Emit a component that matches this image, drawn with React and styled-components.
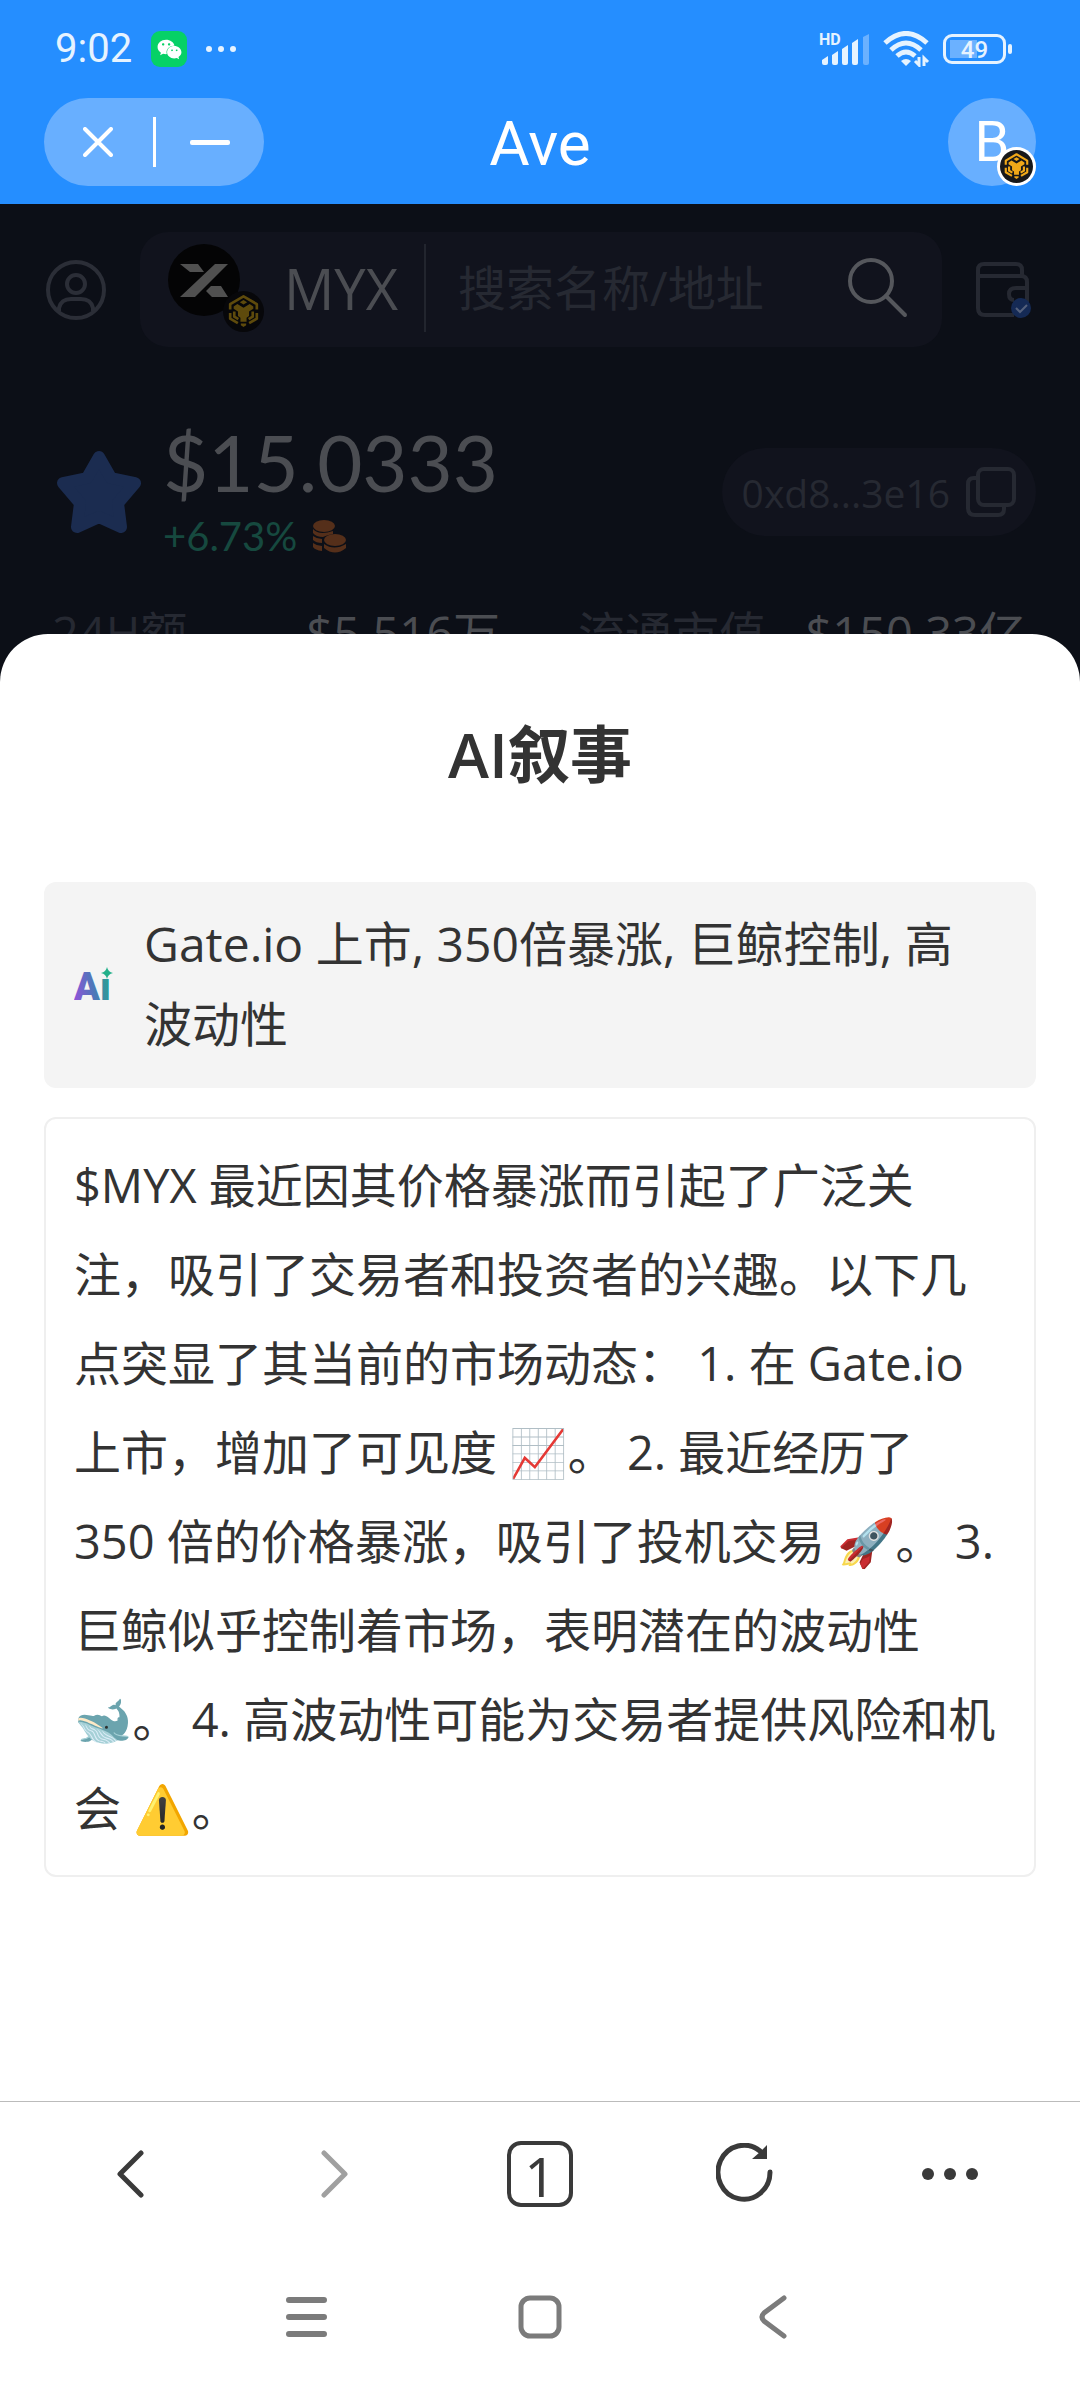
import React from 'react'
import styled, { createGlobalStyle } from 'styled-components'
import { FaWeixin } from 'react-icons/fa'

const GlobalStyle = createGlobalStyle`
  * {
    box-sizing: border-box;
  }
  body {
    margin: 0;
    background: #fff;
    font-family: 'Open Sans', 'Noto Sans CJK SC', 'Noto Color Emoji', sans-serif;
  }
  button, input {
    font-family: inherit;
    border: 0;
    padding: 0;
    margin: 0;
    background: none;
  }
  h1, h2, p, dl, dt, dd {
    margin: 0;
  }
  svg {
    display: block;
    flex-shrink: 0;
  }
`

const ChainLogo = ({ size, color, back }) => (
  <svg width={size} height={size} viewBox="0 0 40 40" aria-hidden="true">
    <circle cx="20" cy="20" r="20" fill={back} />
    <g fill="none" stroke={color} strokeWidth="2.6" strokeLinejoin="round">
      <path d="M7 18 V12.8 L20 5.2 L33 12.8 V18" />
      <path d="M7 21.5 V27 L14.5 31.4" />
      <path d="M33 21.5 V27 L25.5 31.4" />
      <path d="M11 20 V25 L15 27.4" />
      <path d="M29 20 V25 L25 27.4" />
    </g>
    <path d="M16.4 10.9 L20 8.8 L23.6 10.9 L20 13.2 Z" fill={color} />
    <path
      d="M10.4 15 L14 12.8 L20 16.4 L26 12.8 L29.6 15 V17.4 L25.4 20 V24.4 L23 26 V30 H17 V26 L14.6 24.4 V20 L10.4 17.4 Z"
      fill={color}
    />
    <path d="M17.4 31.8 H22.6 V33.4 L20 35 L17.4 33.4 Z" fill={color} />
  </svg>
)

const SignalIcon = () => (
  <svg width="52" height="36" viewBox="0 0 52 36" aria-hidden="true">
    <text x="0" y="14" fill="#e6f3ff" fontFamily="Roboto, sans-serif" fontWeight="700" fontSize="16">HD</text>
    <g fill="#e6f3ff">
      <path d="M3 29 L9 25 V32 Q9 34 7 34 H5 Q3 34 3 32 Z" />
      <path d="M13 24 L19 20 V32 Q19 34 17 34 H15 Q13 34 13 32 Z" />
      <path d="M23 18 L29 14 V32 Q29 34 27 34 H25 Q23 34 23 32 Z" />
      <path d="M33 12 L39 8 V32 Q39 34 37 34 H35 Q33 34 33 32 Z" />
    </g>
    <path d="M44 6 L50 3 V32 Q50 34 48 34 H46 Q44 34 44 32 Z" fill="#6bb1ff" />
  </svg>
)

const WifiIcon = () => (
  <svg width="48" height="36" viewBox="0 0 48 36" aria-hidden="true">
    <g fill="none" stroke="#e6f3ff" strokeWidth="5">
      <path d="M2 12 Q23 -7 44 12" />
      <path d="M8 19 Q23 5 38 19" />
      <path d="M14 25 Q23 17 32 25" />
    </g>
    <path d="M18 30 Q23 26 28 30 L23 35 Z" fill="#e6f3ff" />
    <path d="M36 26 V34 L32 30 M41 35 V27 L45 31" fill="none" stroke="#e6f3ff" strokeWidth="3" />
  </svg>
)

const PersonIcon = () => (
  <svg width="62" height="62" viewBox="0 0 62 62" fill="none" stroke="#2b2e37" strokeWidth="4" aria-hidden="true">
    <circle cx="32" cy="31" r="28" />
    <circle cx="32" cy="25" r="9" />
    <path d="M15 52 V49 Q17 40 27 40 H37 Q47 40 49 49 V52" />
  </svg>
)

const TokenLogo = () => (
  <svg width="72" height="72" viewBox="0 0 72 72" aria-hidden="true">
    <circle cx="36" cy="36" r="36" fill="#040405" />
    <path d="M12 20 H30 L36 28 H22 Z M47 20 H60 L27 53 H12 Z M43 42 H53 L60 53 H44 L38 47 Z" fill="#505050" />
  </svg>
)

const SearchIcon = () => (
  <svg width="60" height="60" viewBox="0 0 60 60" fill="none" stroke="#55575c" strokeWidth="4" strokeLinecap="round" aria-hidden="true">
    <circle cx="23" cy="23" r="21" />
    <path d="M38 38 L57 57" />
  </svg>
)

const WalletIcon = () => (
  <svg width="56" height="56" viewBox="0 0 56 56" fill="none" stroke="#262932" strokeWidth="4" aria-hidden="true">
    <path d="M46 14 V8 Q46 2 40 2 H8 Q2 2 2 8 V46 Q2 53 9 53 H38" />
    <path d="M3 14 H45 Q51 14 51 20 V26 H40 Q33 26 33 32 Q33 38 38 38" />
    <path d="M51 26 V40" />
    <circle cx="45" cy="46" r="10" fill="#152a55" stroke="none" />
    <path d="M40 46 L44 50 L51 43" stroke="#55617c" strokeWidth="2" />
  </svg>
)

const StarIcon = () => (
  <svg width="86" height="84" viewBox="0 0 86 84" aria-hidden="true">
    <path
      d="M43 7 L55 28 L79 33 L62 53 L65 77 L43 67 L21 77 L24 53 L7 33 L31 28 Z"
      fill="#1b2c50"
      stroke="#1b2c50"
      strokeWidth="12"
      strokeLinejoin="round"
    />
  </svg>
)

const CoinsIcon = () => (
  <svg width="34" height="34" viewBox="0 0 34 34" aria-hidden="true">
    <g fill="#552f1a">
      <ellipse cx="11" cy="7" rx="11" ry="6" />
      <path d="M0 10 Q6 17 20 12 V15 Q14 16 10 18 Q3 18 0 14 Z" />
      <path d="M0 17 Q4 20 9 20 V24 Q3 24 0 21 Z" />
      <path d="M0 24 Q4 27 9 27 V32 Q2 31 0 28 Z" />
      <ellipse cx="22" cy="21" rx="11" ry="6" />
      <path d="M11 25 Q21 32 33 25 V29 Q22 38 11 29 Z" />
    </g>
  </svg>
)

const CopyIcon = () => (
  <svg width="50" height="52" viewBox="0 0 50 52" fill="none" stroke="#262932" strokeWidth="4" aria-hidden="true">
    <rect x="12" y="3" width="36" height="36" rx="6" />
    <path d="M12 12 H8 Q2 12 2 18 V42 Q2 49 9 49 H32 Q38 49 38 43 V40" />
  </svg>
)

const AiLogo = () => (
  <svg width="40" height="52" viewBox="0 -8 40 52" aria-hidden="true">
    <defs>
      <linearGradient id="ai" gradientUnits="userSpaceOnUse" x1="0" y1="20" x2="38" y2="14">
        <stop offset="0" stopColor="#8a56d6" />
        <stop offset="0.5" stopColor="#4d78b8" />
        <stop offset="1" stopColor="#22a68b" />
      </linearGradient>
    </defs>
    <text x="0" y="34" fill="url(#ai)" fontFamily="Roboto, sans-serif" fontWeight="900" fontSize="38">Aı</text>
    <path d="M33 1 Q34 6 39 7 Q34 8 33 13 Q32 8 27 7 Q32 6 33 1 Z" fill="#22b08a" />
  </svg>
)

const Chevron = ({ flip, color }) => (
  <svg width="28" height="48" viewBox="0 0 28 48" fill="none" stroke={color} strokeWidth="5" strokeLinecap="round" strokeLinejoin="round" aria-hidden="true">
    <path d={flip ? 'M3 3 L24 24 L3 45' : 'M25 3 L4 24 L25 45'} />
  </svg>
)

const ReloadIcon = () => (
  <svg width="58" height="62" viewBox="0 0 58 62" aria-hidden="true">
    <path d="M54 29 A26 27 0 1 1 44 8" fill="none" stroke="#3a3a3a" strokeWidth="5" strokeLinecap="round" />
    <path d="M51 2 V16 H36 L44 9 Z" fill="#3a3a3a" />
  </svg>
)

const Screen = styled.div`
  display: flex;
  flex-direction: column;
  min-height: 100vh;
`

const TopBar = styled.header`
  height: 204px;
  background: #258eff;
  color: #fff;
  font-family: Roboto, sans-serif;
`

const StatusBar = styled.div`
  display: flex;
  justify-content: space-between;
  align-items: center;
  height: 98px;
  padding: 0 68px 0 55px;
`

const StatusGroup = styled.div`
  display: flex;
  align-items: center;
  gap: ${(props) => props.$gap}px;
  color: #e6f3ff;
`

const Clock = styled.time`
  font-size: 40px;
  line-height: 48px;
`

const WechatTile = styled.span`
  display: flex;
  align-items: center;
  justify-content: center;
  width: 36px;
  height: 36px;
  border-radius: 9px;
  background: #06d166;
  color: #fff;
  font-size: 25px;
`

const Dots = styled.span`
  display: flex;
  gap: ${(props) => props.$gap}px;

  i {
    width: ${(props) => props.$size}px;
    height: ${(props) => props.$size}px;
    border-radius: 50%;
    background: currentColor;
  }
`

const Battery = styled.span`
  display: flex;
  align-items: center;
  gap: 2px;

  &::after {
    content: '';
    width: 4px;
    height: 10px;
    border-radius: 2px;
    background: #e6f3ff;
  }
`

const BatteryBody = styled.span`
  width: 63px;
  height: 30px;
  border: 3px solid #e6f3ff;
  border-radius: 9px;
  text-align: center;
  font-size: 24px;
  font-weight: 500;
  line-height: 26px;
  background: linear-gradient(#6bb1ff, #6bb1ff) 4px 3px / 27px 18px no-repeat;
`

const TitleBar = styled.div`
  display: grid;
  grid-template-columns: 1fr auto 1fr;
  align-items: center;
  height: 88px;
  padding: 0 44px;
`

const AppTitle = styled.h1`
  padding-top: 4px;
  font-size: 62px;
  font-weight: 400;
  line-height: 76px;
`

const Capsule = styled.div`
  display: flex;
  align-items: center;
  width: 220px;
  height: 88px;
  border-radius: 44px;
  background: #68afff;
`

const CapsuleButton = styled.button`
  display: flex;
  flex: 1;
  height: 88px;
  align-items: center;
  justify-content: center;
`

const CapsuleDivider = styled.span`
  width: 3px;
  height: 50px;
  background: #fff;
`

const Avatar = styled.button`
  position: relative;
  justify-self: end;
  width: 88px;
  height: 88px;
  border-radius: 50%;
  background: #68afff;
  color: #fff;
  font-size: 56px;
  line-height: 88px;
`

const AvatarBadge = styled.span`
  position: absolute;
  right: 0;
  bottom: 0;
  padding: 3px;
  border-radius: 50%;
  background: #fff;
`

const Backdrop = styled.main`
  height: 478px;
  padding: 28px 44px 0;
  overflow: hidden;
  background: #0c0f17;
  color: #4b4d52;
`

const SearchRow = styled.div`
  display: flex;
  align-items: center;
  gap: 34px;
  padding-right: 4px;
`

const SearchBox = styled.div`
  display: flex;
  flex: 1;
  min-width: 0;
  align-items: center;
  height: 115px;
  padding: 0 34px 4px 28px;
  border-radius: 28px;
  background: #11131d;
`

const TokenMark = styled.span`
  position: relative;
  width: 96px;
  height: 88px;
`

const TokenBadge = styled.span`
  position: absolute;
  right: 0;
  bottom: 0;
`

const TokenName = styled.span`
  margin-left: 20px;
  font-size: 56px;
  line-height: 72px;
`

const SearchInput = styled.input`
  flex: 1;
  min-width: 0;
  height: 88px;
  margin-left: 26px;
  padding-left: 32px;
  border-left: 2px solid #22252e;
  color: #4b4d52;
  font-size: 48px;
  outline: none;

  &::placeholder {
    color: #262932;
    opacity: 1;
  }
`

const PriceRow = styled.section`
  display: flex;
  align-items: center;
  margin-top: 71px;
  padding-left: 12px;
`

const PriceBlock = styled.div`
  flex: 1;
  margin-left: 21px;
  font-family: Lato, sans-serif;
`

const Price = styled.p`
  font-size: 78px;
  line-height: 88px;
`

const Change = styled.p`
  display: flex;
  align-items: center;
  gap: 16px;
  color: #16493f;
  font-size: 40px;
  line-height: 60px;
`

const AddressButton = styled.button`
  display: flex;
  align-items: center;
  gap: 16px;
  height: 88px;
  padding: 0 20px;
  border-radius: 44px;
  background: #11131d;
  color: #262932;
  font-size: 39px;
`

const Stats = styled.dl`
  display: flex;
  justify-content: space-between;
  margin-top: 37px;
  padding: 0 10px 0 8px;
  font-size: 47px;
  line-height: 60px;
  white-space: nowrap;
`

const Stat = styled.div`
  display: flex;
  justify-content: space-between;
  width: ${(props) => props.$width}%;

  dt {
    color: #262932;
  }
`

const Sheet = styled.section`
  position: relative;
  flex: 1;
  margin-top: -48px;
  padding: 80px 44px 0;
  border-radius: 48px 48px 0 0;
  background: #fff;
  color: #333;
`

const SheetTitle = styled.h2`
  font-size: 62px;
  font-weight: 600;
  line-height: 80px;
  text-align: center;
`

const Summary = styled.div`
  display: flex;
  align-items: center;
  gap: 30px;
  margin-top: 88px;
  padding: 22px 48px 24px 30px;
  border-radius: 12px;
  background: #f4f4f4;
  font-size: 48px;
  line-height: 80px;
`

const Narrative = styled.p`
  margin-top: 29px;
  padding: 22px 28px;
  border: 2px solid #efefef;
  border-radius: 12px;
  font-size: 47px;
  line-height: 89px;
`

const BottomBar = styled.nav`
  display: grid;
  grid-template-columns: repeat(5, 1fr);
  height: 144px;
  padding: 0 28px;
  border-top: 1px solid #bbb;
  color: #3a3a3a;
`

const SystemNav = styled.nav`
  display: grid;
  grid-template-columns: repeat(3, 1fr);
  height: 155px;
  padding: 0 190px 12px;
`

const BarButton = styled.button`
  display: flex;
  align-items: center;
  justify-content: center;
  color: inherit;
`

const TabCount = styled.span`
  width: 66px;
  height: 66px;
  border: 4px solid #3a3a3a;
  border-radius: 14px;
  font-family: 'Noto Sans', sans-serif;
  font-size: 54px;
  line-height: 62px;
`

const App = () => {
  return (
    <>
      <GlobalStyle />
      <Screen>
        <TopBar>
          <StatusBar>
            <StatusGroup $gap={19}>
              <Clock>9:02</Clock>
              <WechatTile><FaWeixin /></WechatTile>
              <Dots $size={6} $gap={6}><i /><i /><i /></Dots>
            </StatusGroup>
            <StatusGroup $gap={12}>
              <SignalIcon />
              <WifiIcon />
              <Battery><BatteryBody>49</BatteryBody></Battery>
            </StatusGroup>
          </StatusBar>
          <TitleBar>
            <Capsule>
              <CapsuleButton aria-label="关闭">
                <svg width="30" height="30" viewBox="0 0 30 30" stroke="#fff" strokeWidth="4" strokeLinecap="round">
                  <path d="M2 2 L28 28 M28 2 L2 28" />
                </svg>
              </CapsuleButton>
              <CapsuleDivider />
              <CapsuleButton aria-label="最小化">
                <svg width="40" height="5" viewBox="0 0 40 5">
                  <rect width="40" height="5" rx="2" fill="#fff" />
                </svg>
              </CapsuleButton>
            </Capsule>
            <AppTitle>Ave</AppTitle>
            <Avatar>
              B
              <AvatarBadge><ChainLogo size={33} color="#f0a818" back="#17181a" /></AvatarBadge>
            </Avatar>
          </TitleBar>
        </TopBar>

        <Backdrop>
          <SearchRow>
            <PersonIcon />
            <SearchBox>
              <TokenMark>
                <TokenLogo />
                <TokenBadge><ChainLogo size={41} color="#5e4a0c" back="#07070a" /></TokenBadge>
              </TokenMark>
              <TokenName>MYX</TokenName>
              <SearchInput type="text" placeholder="搜索名称/地址" aria-label="搜索名称/地址" />
              <SearchIcon />
            </SearchBox>
            <WalletIcon />
          </SearchRow>
          <PriceRow>
            <StarIcon />
            <PriceBlock>
              <Price>$15.0333</Price>
              <Change>+6.73% <CoinsIcon /></Change>
            </PriceBlock>
            <AddressButton>0xd8...3e16 <CopyIcon /></AddressButton>
          </PriceRow>
          <Stats>
            <Stat $width={46}><dt>24H额</dt><dd>$5.516万</dd></Stat>
            <Stat $width={46}><dt>流通市值</dt><dd>$150.33亿</dd></Stat>
          </Stats>
        </Backdrop>

        <Sheet>
          <SheetTitle>AI叙事</SheetTitle>
          <Summary>
            <AiLogo />
            <p>Gate.io 上市, 350倍暴涨, 巨鲸控制, 高波动性</p>
          </Summary>
          <Narrative>
            $MYX 最近因其价格暴涨而引起了广泛关注，吸引了交易者和投资者的兴趣。以下几点突显了其当前的市场动态： 1.
            在 Gate.io 上市，增加了可见度 📈。 2. 最近经历了 350 倍的价格暴涨，吸引了投机交易 🚀。 3.
            巨鲸似乎控制着市场，表明潜在的波动性 🐋。 4. 高波动性可能为交易者提供风险和机会 ⚠️。
          </Narrative>
        </Sheet>

        <BottomBar>
          <BarButton aria-label="后退"><Chevron color="#3a3a3a" /></BarButton>
          <BarButton aria-label="前进"><Chevron flip color="#a0a0a0" /></BarButton>
          <BarButton aria-label="标签页"><TabCount>1</TabCount></BarButton>
          <BarButton aria-label="刷新"><ReloadIcon /></BarButton>
          <BarButton aria-label="更多"><Dots $size={12} $gap={10}><i /><i /><i /></Dots></BarButton>
        </BottomBar>
        <SystemNav>
          <BarButton aria-label="菜单">
            <svg width="41" height="40" viewBox="0 0 41 40" stroke="#7b7b7b" strokeWidth="6" strokeLinecap="round">
              <path d="M3 3 H38 M3 20 H38 M3 37 H38" />
            </svg>
          </BarButton>
          <BarButton aria-label="主页">
            <svg width="44" height="44" viewBox="0 0 44 44" fill="none" stroke="#7b7b7b" strokeWidth="5">
              <rect x="3" y="3" width="38" height="38" rx="9" />
            </svg>
          </BarButton>
          <BarButton aria-label="返回">
            <svg width="28" height="44" viewBox="0 0 28 44" fill="none" stroke="#7b7b7b" strokeWidth="5" strokeLinecap="round">
              <path d="M25 3 L5 18 Q1 22 5 26 L25 41" />
            </svg>
          </BarButton>
        </SystemNav>
      </Screen>
    </>
  )
}

export default App
